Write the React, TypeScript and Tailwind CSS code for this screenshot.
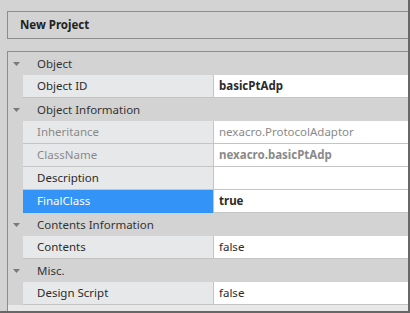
type Row =
  | { kind: "cat"; label: string }
  | {
      kind: "prop";
      name: string;
      value: string;
      dim?: boolean;
      bold?: boolean;
      selected?: boolean;
    };

const rows: Row[] = [
  { kind: "cat", label: "Object" },
  { kind: "prop", name: "Object ID", value: "basicPtAdp", bold: true },
  { kind: "cat", label: "Object Information" },
  { kind: "prop", name: "Inheritance", value: "nexacro.ProtocolAdaptor", dim: true },
  { kind: "prop", name: "ClassName", value: "nexacro.basicPtAdp", dim: true, bold: true },
  { kind: "prop", name: "Description", value: "" },
  { kind: "prop", name: "FinalClass", value: "true", bold: true, selected: true },
  { kind: "cat", label: "Contents Information" },
  { kind: "prop", name: "Contents", value: "false" },
  { kind: "cat", label: "Misc." },
  { kind: "prop", name: "Design Script", value: "false" },
];

function Caret() {
  return (
    <svg width="7" height="4" viewBox="0 0 7 4" className="block">
      <path d="M0 0h7L3.5 4z" fill="#7a7a7a" />
    </svg>
  );
}

export default function App() {
  return (
    <div
      className="w-[410px] h-[313px] bg-[#d3d3d3] border-r-2 border-b-2 border-[#676767] pl-[7px] pt-[11px] flex flex-col text-[11.5px] text-[#2b2b2b] overflow-hidden"
      style={{ fontFamily: '"Noto Sans", "Open Sans", sans-serif' }}
    >
      {/* Header */}
      <div className="h-[28px] border-t border-l border-b border-[#8c8c8c] flex items-center pl-[12px] font-bold text-[11.5px] text-[#222]">
        New Project
      </div>

      {/* Property grid */}
      <div className="mt-[12px] flex-1 border-t border-l border-[#8c8c8c] bg-[#e8e8e8] flex flex-col">
        {rows.map((r, i) =>
          r.kind === "cat" ? (
            <div key={i} className="h-[23px] bg-[#d3d3d3] flex items-center shrink-0">
              <div className="w-[15px] flex justify-center pl-[1px]">
                <Caret />
              </div>
              <span className="pl-[14px] text-[#333]">{r.label}</span>
            </div>
          ) : (
            <div key={i} className="h-[23px] flex bg-[#d3d3d3] shrink-0">
              <div className="w-[15px]" />
              <div
                className={`w-[190px] flex items-center pl-[14px] border-b ${
                  r.selected
                    ? "bg-[#3393f7] text-white border-[#3393f7]"
                    : r.dim
                    ? "bg-[#e7e8e9] text-[#8a8a8a] border-[#c4c4c4]"
                    : "bg-[#e7e8e9] text-[#2b2b2b] border-[#c4c4c4]"
                }`}
              >
                {r.name}
              </div>
              <div
                className={`flex-1 flex items-center pl-[5px] bg-white border-l border-b border-[#c4c4c4] ${
                  r.dim ? "text-[#8a8a8a]" : "text-[#2b2b2b]"
                } ${r.bold ? "font-bold" : ""}`}
              >
                {r.value}
              </div>
            </div>
          )
        )}
      </div>
    </div>
  );
}
